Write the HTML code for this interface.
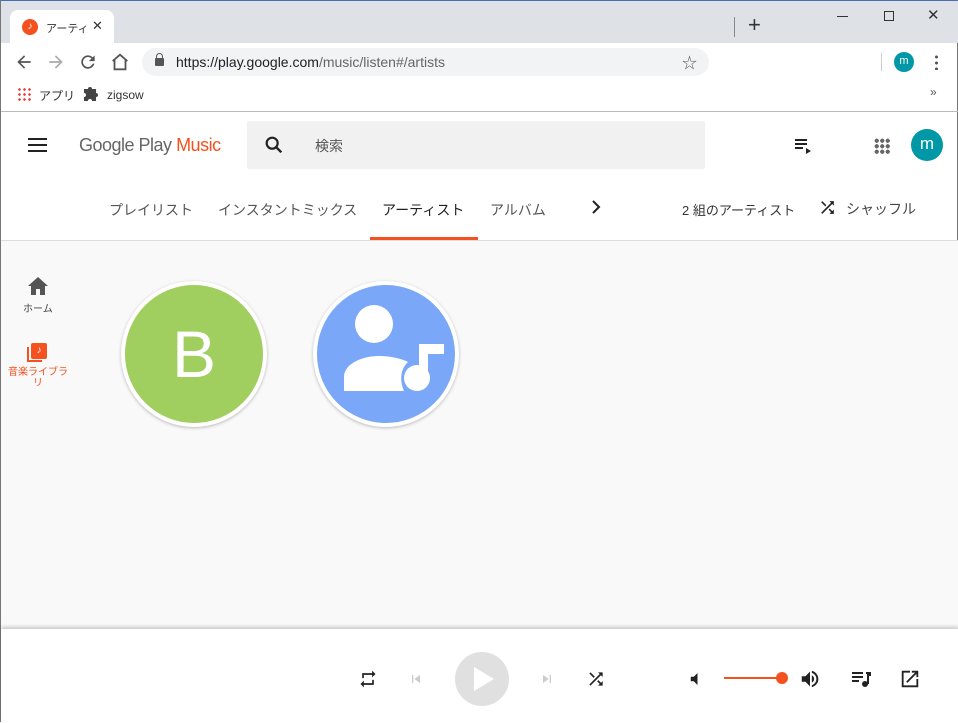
<!DOCTYPE html><html><head><meta charset="utf-8"><style>
*{margin:0;padding:0;box-sizing:border-box}
body{width:958px;height:722px;overflow:hidden;font-family:"Liberation Sans","Noto Sans CJK JP",sans-serif;background:#fff;position:relative;border-left:1px solid #777;border-right:1px solid #777;border-top:1px solid #4a6fb0}
.a{position:absolute}
svg{position:absolute}
.t{font-size:14px;color:#555;top:199px;white-space:nowrap}
</style></head><body>
<div class="a" style="left:0;top:0;width:958px;height:42px;background:#dee1e6"></div>
<div class="a" style="left:9px;top:9px;width:104px;height:34px;background:#fff;border-radius:8px 8px 0 0"></div>
<div class="a" style="left:21px;top:18px;width:16px;height:16px;border-radius:50%;background:#f4511e;color:#fff;font-size:10px;text-align:center;line-height:16px">♪</div>
<div class="a" style="left:45px;top:19px;font-size:11px;color:#333;width:40px;overflow:hidden;white-space:nowrap">アーティスト</div>
<div class="a" style="left:91px;top:17px;font-size:13px;color:#333">✕</div>
<div class="a" style="left:733px;top:16px;width:1px;height:20px;background:#888"></div>
<div class="a" style="left:747px;top:11px;font-size:22px;color:#333">+</div>
<div class="a" style="left:836px;top:15px;width:11px;height:1px;background:#333"></div>
<div class="a" style="left:883px;top:10px;width:10px;height:10px;border:1px solid #333"></div>
<div class="a" style="left:926px;top:5px;font-size:15px;color:#333">✕</div>
<svg style="left:13px;top:51px" width="20" height="20" viewBox="0 0 24 24"><path d="M20 11H7.8l5.6-5.6L12 4l-8 8 8 8 1.4-1.4L7.8 13H20z" fill="#555"/></svg>
<svg style="left:45px;top:51px" width="20" height="20" viewBox="0 0 24 24"><path d="M4 11h12.2l-5.6-5.6L12 4l8 8-8 8-1.4-1.4 5.6-5.6H4z" fill="#aaa"/></svg>
<svg style="left:77px;top:51px" width="20" height="20" viewBox="0 0 24 24"><path d="M17.6 6.4A8 8 0 1 0 19.7 14h-2.1A6 6 0 1 1 12 6c1.7 0 3.1.7 4.2 1.8L13 11h7V4z" fill="#555"/></svg>
<svg style="left:108px;top:50px" width="22" height="22" viewBox="0 0 24 24"><path d="M4 11L12 4l8 7M6 10v10h12V10" fill="none" stroke="#555" stroke-width="2"/></svg>
<div class="a" style="left:141px;top:47px;width:567px;height:28px;background:#f1f3f4;border-radius:14px"></div>
<div class="a" style="left:154px;top:57px;width:9px;height:8px;background:#555;border-radius:1px"></div>
<div class="a" style="left:155px;top:52px;width:7px;height:7px;border:1.5px solid #555;border-radius:4px 4px 0 0"></div>
<div class="a" style="left:175px;top:53px;font-size:14px;color:#202124">https://play.google.com<span style="color:#666">/music/listen#/artists</span></div>
<div class="a" style="left:681px;top:51px;font-size:15px;color:#555">☆</div>
<div class="a" style="left:880px;top:52px;width:1px;height:18px;background:#ccc"></div>
<div class="a" style="left:893px;top:51px;width:20px;height:20px;border-radius:50%;background:#0097a7;color:#fff;font-size:11px;text-align:center;line-height:19px">m</div>
<div class="a" style="left:934px;top:53px;width:3px;height:16px;background:radial-gradient(circle,#555 1.4px,transparent 1.6px) 0 0/3px 6px"></div>
<div class="a" style="left:16px;top:86px;width:14px;height:14px;background:radial-gradient(circle,#e53935 1.2px,transparent 1.4px) 0 0/5px 5px"></div>
<div class="a" style="left:38px;top:86px;font-size:12px;color:#333">アプリ</div>
<svg style="left:81px;top:84px" width="18" height="17" viewBox="0 0 18 17"><path d="M2 4h4a2 2 0 1 1 4 0h4v4a2 2 0 1 1 0 4v4H10a2 2 0 1 0-4 0H2v-4a2 2 0 1 0 0-4z" fill="#444"/></svg>
<div class="a" style="left:106px;top:87px;font-size:12px;color:#333">zigsow</div>
<div class="a" style="left:929px;top:84px;font-size:12px;color:#555">»</div>
<div class="a" style="left:0;top:110px;width:958px;height:1px;background:#bbb"></div>
<div class="a" style="left:27px;top:137px;width:19px;height:2px;background:#222;box-shadow:0 6px 0 #222,0 12px 0 #222"></div>
<div class="a" style="left:78px;top:134px;font-size:18px;color:#666;letter-spacing:-0.5px">Google Play <span style="color:#f4511e">Music</span></div>
<div class="a" style="left:246px;top:120px;width:458px;height:48px;background:#f1f1f1;border-radius:2px"></div>
<svg style="left:262px;top:133px" width="22" height="22" viewBox="0 0 24 24"><circle cx="10" cy="10" r="6" fill="none" stroke="#222" stroke-width="2.4"/><path d="M14.5 14.5L20 20" stroke="#222" stroke-width="2.6"/></svg>
<div class="a" style="left:314px;top:135px;font-size:14px;color:#555">検索</div>
<svg style="left:793px;top:136px" width="18" height="18" viewBox="0 0 18 18"><path d="M1 3h12M1 7h12M1 11h8" stroke="#222" stroke-width="2"/><path d="M12 11l5 3-5 3z" fill="#222"/></svg>
<div class="a" style="left:873px;top:137px;width:16px;height:16px;background:radial-gradient(circle,#666 2px,transparent 2.2px) 0 0/5.5px 5.5px"></div>
<div class="a" style="left:910px;top:128px;width:32px;height:32px;border-radius:50%;background:#0097a7;color:#fff;font-size:17px;text-align:center;line-height:30px">m</div>
<div class="a t" style="left:108px">プレイリスト</div>
<div class="a t" style="left:217px">インスタントミックス</div>
<div class="a t" style="left:381px;color:#222">アーティスト</div>
<div class="a" style="left:369px;top:236px;width:108px;height:3px;background:#f4511e"></div>
<div class="a t" style="left:489px">アルバム</div>
<svg style="left:587px;top:198px" width="16" height="16" viewBox="0 0 16 16"><path d="M5 2l6 6-6 6" fill="none" stroke="#222" stroke-width="2"/></svg>
<div class="a" style="left:681px;top:199px;font-size:13px;color:#333">2 組のアーティスト</div>
<svg style="left:817px;top:197px" width="19" height="19" viewBox="0 0 24 24"><path d="M10.6 9.2L5.4 4 4 5.4l5.2 5.2zM14.5 4l2 2L4 18.6 5.4 20 17.9 7.5l2.1 2V4zm.3 9.4l-1.4 1.4 3.1 3.1L14.5 20H20v-5.5l-2 2z" fill="#222"/></svg>
<div class="a" style="left:845px;top:198px;font-size:14px;color:#444">シャッフル</div>
<div class="a" style="left:0;top:239px;width:958px;height:1px;background:#ddd"></div>
<div class="a" style="left:0;top:240px;width:958px;height:390px;background:#f9f9f9"></div>
<svg style="left:27px;top:276px" width="20" height="18" viewBox="0 0 20 18"><path d="M10 0L0 9h3v9h5v-6h4v6h5V9h3z" fill="#555"/></svg>
<div class="a" style="left:22px;top:299px;font-size:10px;color:#444">ホーム</div>
<div class="a" style="left:26px;top:346px;width:15px;height:15px;border-left:2px solid #f4511e;border-bottom:2px solid #f4511e"></div>
<div class="a" style="left:30px;top:342px;width:16px;height:16px;background:#f4511e;border-radius:2px;color:#fff;font-size:10px;text-align:center;line-height:16px">♪</div>
<div class="a" style="left:5px;top:366px;width:64px;font-size:10px;line-height:11px;color:#f4511e;text-align:center">音楽ライブラリ</div>
<div class="a" style="left:120px;top:280px;width:146px;height:146px;border-radius:50%;background:#a0ce5f;border:4px solid #fff;box-shadow:0 1px 3px rgba(0,0,0,.25);color:#fff;font-size:66px;text-align:center;line-height:138px;font-weight:300">B</div>
<div class="a" style="left:312px;top:280px;width:146px;height:146px;border-radius:50%;background:#7aa7f8;border:4px solid #fff;box-shadow:0 1px 3px rgba(0,0,0,.25)"></div>
<svg style="left:312px;top:280px" width="146" height="146" viewBox="0 0 146 146"><circle cx="61" cy="43" r="19" fill="#fff"/><path d="M31 110v-14c0-14 20-21 34-21 14 0 24 3 30 6-7 6-9 18-4 29z" fill="#fff"/><circle cx="104" cy="97" r="13" fill="#fff"/><rect x="106" y="63" width="9" height="36" fill="#fff"/><rect x="106" y="63" width="25" height="10" fill="#fff"/></svg>
<div class="a" style="left:0;top:628px;width:958px;height:94px;background:#fff;box-shadow:0 -2px 4px rgba(0,0,0,.2)"></div>
<svg style="left:357px;top:668px" width="20" height="20" viewBox="0 0 24 24"><path d="M7 7h10v3l4-4-4-4v3H5v6h2zm10 10H7v-3l-4 4 4 4v-3h12v-6h-2z" fill="#222"/></svg>
<svg style="left:407px;top:670px" width="16" height="16" viewBox="0 0 24 24"><path d="M6 6h2v12H6zm3.5 6l8.5 6V6z" fill="#ccc"/></svg>
<div class="a" style="left:454px;top:651px;width:54px;height:54px;border-radius:50%;background:#e0e0e0"></div>
<svg style="left:470px;top:664px" width="26" height="28" viewBox="0 0 26 28"><path d="M3 2l20 12L3 26z" fill="#fff"/></svg>
<svg style="left:538px;top:670px" width="16" height="16" viewBox="0 0 24 24"><path d="M6 18l8.5-6L6 6zM16 6v12h2V6z" fill="#ccc"/></svg>
<svg style="left:585px;top:668px" width="20" height="20" viewBox="0 0 24 24"><path d="M10.6 9.2L5.4 4 4 5.4l5.2 5.2zM14.5 4l2 2L4 18.6 5.4 20 17.9 7.5l2.1 2V4zm.3 9.4l-1.4 1.4 3.1 3.1L14.5 20H20v-5.5l-2 2z" fill="#222"/></svg>
<svg style="left:686px;top:669px" width="18" height="18" viewBox="0 0 24 24"><path d="M5 9v6h4l5 5V4L9 9z" fill="#222"/></svg>
<div class="a" style="left:723px;top:676px;width:58px;height:2px;background:#f4511e"></div>
<div class="a" style="left:775px;top:671px;width:12px;height:12px;border-radius:50%;background:#f4511e"></div>
<svg style="left:798px;top:667px" width="22" height="22" viewBox="0 0 24 24"><path d="M3 9v6h4l5 5V4L7 9zm13.5 3A4.5 4.5 0 0 0 14 8v8a4.5 4.5 0 0 0 2.5-4zM14 3.2v2.1a7 7 0 0 1 0 13.4v2.1a9 9 0 0 0 0-17.6z" fill="#222"/></svg>
<svg style="left:850px;top:669px" width="20" height="18" viewBox="0 0 20 18"><path d="M1 3h11M1 7h11M1 11h7" stroke="#222" stroke-width="2"/><path d="M15 3h4v2h-2v9" stroke="#222" stroke-width="2" fill="none"/><circle cx="14" cy="14" r="3" fill="#222"/></svg>
<svg style="left:898px;top:667px" width="22" height="22" viewBox="0 0 24 24"><path d="M19 19H5V5h7V3H3v18h18v-9h-2zM14 3v2h3.6l-9.8 9.8 1.4 1.4L19 6.4V10h2V3z" fill="#222"/></svg>
</body></html>
